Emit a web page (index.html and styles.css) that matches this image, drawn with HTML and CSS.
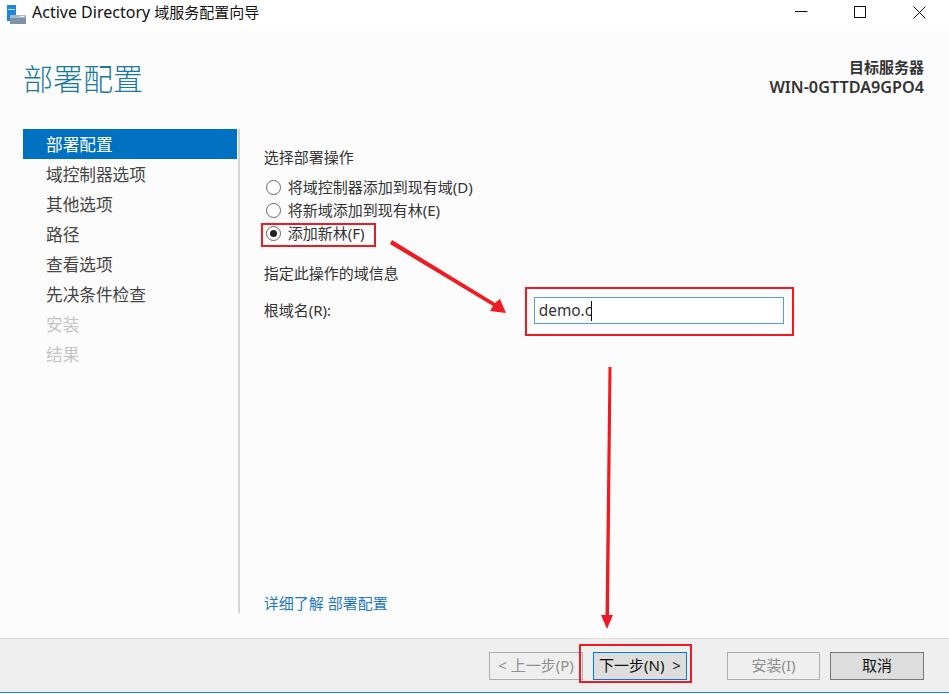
FILE: index.html
```html
<!DOCTYPE html>
<html lang="zh-CN">
<head>
<meta charset="utf-8">
<title>Active Directory 域服务配置向导</title>
<link rel="stylesheet" href="styles.css">
</head>
<body>
<div class="window">
  <header class="titlebar">
    <svg class="app-icon" width="22" height="22" viewBox="0 0 22 22">
      <rect x="0" y="1" width="9" height="16" fill="#1e88d8"/>
      <rect x="1" y="5" width="7" height="1" fill="#bfe0f7"/>
      <rect x="3" y="11" width="16" height="9" fill="#7f93a6"/>
      <rect x="3" y="11" width="16" height="3" fill="#a9b8c6"/>
      <rect x="13" y="12" width="4" height="1" fill="#eef2f5"/>
    </svg>
    <div class="title-text">Active Directory <span class="title-cjk">域服务配置向导</span></div>
    <div class="win-controls">
      <svg class="win-btn" width="13" height="13" viewBox="0 0 13 13"><path d="M0 5.5H12.5" stroke="#111" fill="none"/></svg>
      <svg class="win-btn" width="13" height="13" viewBox="0 0 13 13"><rect x="0.5" y="0.5" width="11" height="11" stroke="#111" fill="none"/></svg>
      <svg class="win-btn" width="13" height="13" viewBox="0 0 13 13"><path d="M0.5 0.5L12.5 12.5M12.5 0.5L0.5 12.5" stroke="#111" fill="none"/></svg>
    </div>
  </header>

  <section class="page-head">
    <h1 class="page-title">部署配置</h1>
    <div class="target">
      <div class="server-label">目标服务器</div>
      <div class="server-name">WIN-0GTTDA9GPO4</div>
    </div>
  </section>

  <main class="main">
    <nav class="sidebar">
      <div class="nav-item active">部署配置</div>
      <div class="nav-item">域控制器选项</div>
      <div class="nav-item">其他选项</div>
      <div class="nav-item">路径</div>
      <div class="nav-item">查看选项</div>
      <div class="nav-item">先决条件检查</div>
      <div class="nav-item disabled">安装</div>
      <div class="nav-item disabled">结果</div>
    </nav>
    <div class="content">
      <div class="label">选择部署操作</div>
      <div class="radios">
        <div class="radio-row"><span class="radio"></span><span class="radio-text">将域控制器添加到现有域(D)</span></div>
        <div class="radio-row"><span class="radio"></span><span class="radio-text">将新域添加到现有林(E)</span></div>
        <div class="radio-row"><span class="radio checked"></span><span class="radio-text">添加新林(F)</span></div>
      </div>
      <div class="label info-label">指定此操作的域信息</div>
      <div class="form-row">
        <div class="form-label"><span class="form-text">根域名(R):</span></div>
        <div class="input"><span>demo.c</span><span class="caret"></span></div>
      </div>
      <a class="link">详细了解 部署配置</a>
    </div>
  </main>

  <footer class="footer">
    <button class="btn disabled">&lt; 上一步(P)</button>
    <button class="btn primary">下一步(N) &nbsp;&gt;</button>
    <button class="btn disabled install">安装(I)</button>
    <button class="btn cancel">取消</button>
  </footer>
  <div class="bottom-line"></div>
</div>

<svg class="annotations" width="949" height="694" viewBox="0 0 949 694">
  <g fill="none" stroke="#ed1c24" stroke-width="2">
    <rect x="262" y="224" width="113" height="22"/>
    <rect x="526" y="288" width="267" height="47"/>
    <rect x="580" y="645" width="111" height="37"/>
  </g>
  <g fill="#ed1c24">
    <polygon points="392,240 495,303 500,299 506,313 490,311 493,306 390,244"/>
    <polygon points="608.5,367 611.5,367 609,615 613,615 607,629 601,615 605.5,615"/>
  </g>
</svg>
</body>
</html>
```
FILE: styles.css
```css
* { box-sizing: border-box; }
html, body { margin: 0; padding: 0; background: #fff; }
body {
  width: 949px;
  height: 694px;
  position: relative;
  overflow: hidden;
  font-family: "Noto Sans", "Noto Sans CJK SC", sans-serif;
  font-size: 15px;
  color: #333;
}
.window { display: flex; flex-direction: column; height: 694px; }

.titlebar { height: 30px; background: #fff; display: flex; align-items: center; padding-left: 7px; }
.app-icon { margin-right: 3px; }
.title-text { font-size: 16px; color: #111; line-height: 22px; margin-top: -6px; }
.title-cjk { font-size: 15px; }
.win-controls { margin-left: auto; display: flex; padding-right: 23px; margin-top: -6px; }
.win-btn { margin-left: 46px; }

.page-head {
  height: 99px;
  background: #fcfcfc;
  display: flex;
  justify-content: space-between;
  padding: 29px 25px 0 23px;
}
.page-title { margin: 0; font-size: 30px; font-weight: 300; line-height: 40px; color: #1a7a9e; }
.target { text-align: right; font-weight: 600; color: #333; margin-top: -2px; }
.server-label { line-height: 20px; height: 20px; }
.server-name { font-size: 16.2px; line-height: 20px; height: 20px; }

.main { height: 509px; background: #fcfcfc; display: flex; align-items: flex-start; }
.sidebar { width: 214px; margin-left: 23px; }
.nav-item { height: 30px; line-height: 30px; padding: 1px 0 0 23px; font-size: 16.67px; color: #444; }
.nav-item.active { background: #0070c0; color: #fff; }
.nav-item.disabled { color: #c4c4c4; }

.content {
  width: 712px;
  height: 484px;
  margin-left: 1px;
  border-left: 2px solid #d4d4d4;
  padding: 17px 0 0 24px;
  display: flex;
  flex-direction: column;
}
.label { line-height: 22px; }
.radios { margin-top: 8px; }
.radio-row { height: 23px; display: flex; align-items: center; gap: 7px; margin-left: 2px; }
.radio-text { margin-top: -2px; }
.radio { width: 15px; height: 15px; border: 1px solid #666; border-radius: 50%; background: #fff; position: relative; }
.radio.checked::after {
  content: "";
  position: absolute;
  left: 3px; top: 3px;
  width: 7px; height: 7px;
  border-radius: 50%;
  background: #222;
}
.info-label { margin-top: 17px; }
.form-row { display: flex; align-items: center; margin-top: 13px; height: 27px; }
.form-label { width: 270px; }
.form-text { position: relative; top: -1px; }
.input {
  width: 250px;
  height: 27px;
  border: 1px solid #5b9bd5;
  background: #fff;
  padding: 0 0 1px 4px;
  display: flex;
  align-items: center;
  color: #333;
  font-size: 15.4px;
}
.caret { width: 1px; height: 20px; background: #111; margin: 1px 0 0 -1px; }
.link { margin-top: auto; margin-bottom: -1px; line-height: 22px; color: #1f78c1; }

.footer {
  height: 54px;
  background: #efefef;
  border-top: 1px solid #dedede;
  display: flex;
  align-items: flex-start;
  padding: 13px 0 0 489px;
}
.btn {
  width: 94px;
  height: 28px;
  padding: 0 0 3px;
  font: inherit;
  background: #dddddd;
  border: 1px solid #777;
  color: #111;
}
.btn.disabled { background: #efefef; border: 1px solid #adadad; color: #8f8f8f; }
.btn.primary { margin-left: 10px; border-color: #0078d7; }
.btn.install { margin-left: 40px; width: 93px; }
.btn.cancel { margin-left: 10px; }
.bottom-line { height: 1px; background: #1e88d8; }

.annotations { position: absolute; left: 0; top: 0; pointer-events: none; }
```
